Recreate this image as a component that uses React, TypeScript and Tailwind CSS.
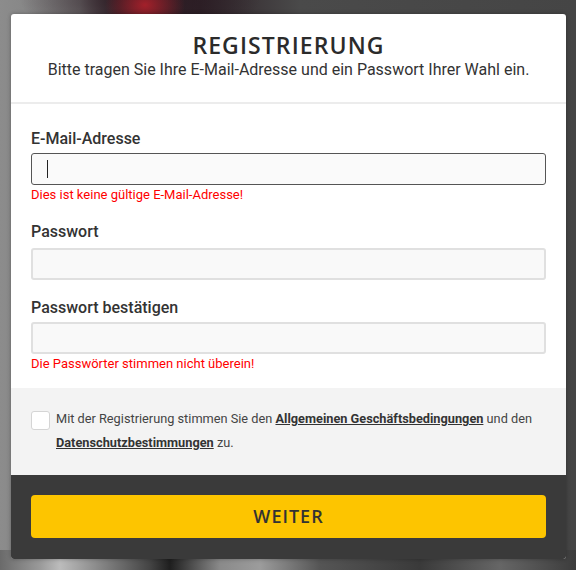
import React from "react";

export default function App() {
  return (
    <div className="relative w-[576px] h-[570px] overflow-hidden bg-[#5a5a5a] font-['Roboto',sans-serif]">
      <div className="absolute inset-0 bg-[radial-gradient(ellipse_40px_30px_at_145px_5px,#a3202a,transparent),radial-gradient(ellipse_120px_40px_at_140px_0px,#2a1a22,transparent),linear-gradient(90deg,#8c8c8c_0px,#7d7d7d_80px,#3a2a30_120px,#2e2228_200px,#4a4a4a_300px,#454545_576px)]" />
      <div className="absolute left-0 right-0 bottom-0 h-[20px] bg-[linear-gradient(90deg,#6a6a6a_0px,#9a9a9a_40px,#bcbcbc_60px,#444_150px,#1f1f1f_170px,#8a8a8a_220px,#9c9c9c_260px,#555_320px,#3a3a3a_420px,#666_500px,#3c3c3c_576px)]" />
      <div className="relative ml-[11px] mr-[10px] mt-[14px] h-[545px] rounded-[3px] overflow-hidden bg-white flex flex-col shadow-[0_0_4px_rgba(0,0,0,0.3)]">
        <div className="h-[90px] border-b-2 border-[#ececec] flex flex-col items-center pt-[19px]">
          <div className="font-['Open_Sans',sans-serif] font-semibold text-[23px] leading-[24px] tracking-[1.1px] text-[#2b2b2b]">
            REGISTRIERUNG
          </div>
          <div className="text-[16px] leading-[20px] mt-[3px] text-[#333]">
            Bitte tragen Sie Ihre E-Mail-Adresse und ein Passwort Ihrer Wahl ein.
          </div>
        </div>
        <div className="px-[20px] pt-[25px] h-[284px]">
          <div className="text-[16px] font-medium leading-[20px] text-[#333]">E-Mail-Adresse</div>
          <div className="mt-[4px] h-[32px] border border-[#555] rounded-[3px] bg-[#fafafa] flex items-center pl-[15px]">
            <div className="w-[1px] h-[18px] bg-[#222]" />
          </div>
          <div className="text-[13px] leading-[18px] mt-[1px] text-[#ff0000]">Dies ist keine gültige E-Mail-Adresse!</div>
          <div className="text-[16px] font-medium leading-[20px] text-[#333] mt-[18px]">Passwort</div>
          <div className="mt-[6px] h-[32px] border-2 border-[#e0e0e0] rounded-[3px] bg-[#f9f9f9]" />
          <div className="text-[16px] font-medium leading-[20px] text-[#333] mt-[18px]">Passwort bestätigen</div>
          <div className="mt-[4px] h-[32px] border-2 border-[#e0e0e0] rounded-[3px] bg-[#f9f9f9]" />
          <div className="text-[13px] leading-[18px] mt-[1px] text-[#ff0000]">Die Passwörter stimmen nicht überein!</div>
        </div>
        <div className="h-[87px] bg-[#f3f3f3] flex px-[20px] pt-[19px] gap-[6px]">
          <div className="w-[19px] h-[19px] mt-[4px] shrink-0 rounded-[3px] border border-[#d5d5d5] bg-white" />
          <div className="text-[12.75px] leading-[24px] text-[#444]">
            Mit der Registrierung stimmen Sie den{" "}
            <span className="font-bold underline text-[#333]">Allgemeinen Geschäftsbedingungen</span> und den{" "}
            <span className="font-bold underline text-[#333]">Datenschutzbestimmungen</span> zu.
          </div>
        </div>
        <div className="flex-1 bg-[#3a3a3a] px-[20px] pt-[20px]">
          <div className="h-[43px] rounded-[4px] bg-[#fdc500] flex items-center justify-center font-['Open_Sans',sans-serif] font-semibold text-[18px] tracking-[1px] text-[#333]">
            WEITER
          </div>
        </div>
      </div>
    </div>
  );
}
